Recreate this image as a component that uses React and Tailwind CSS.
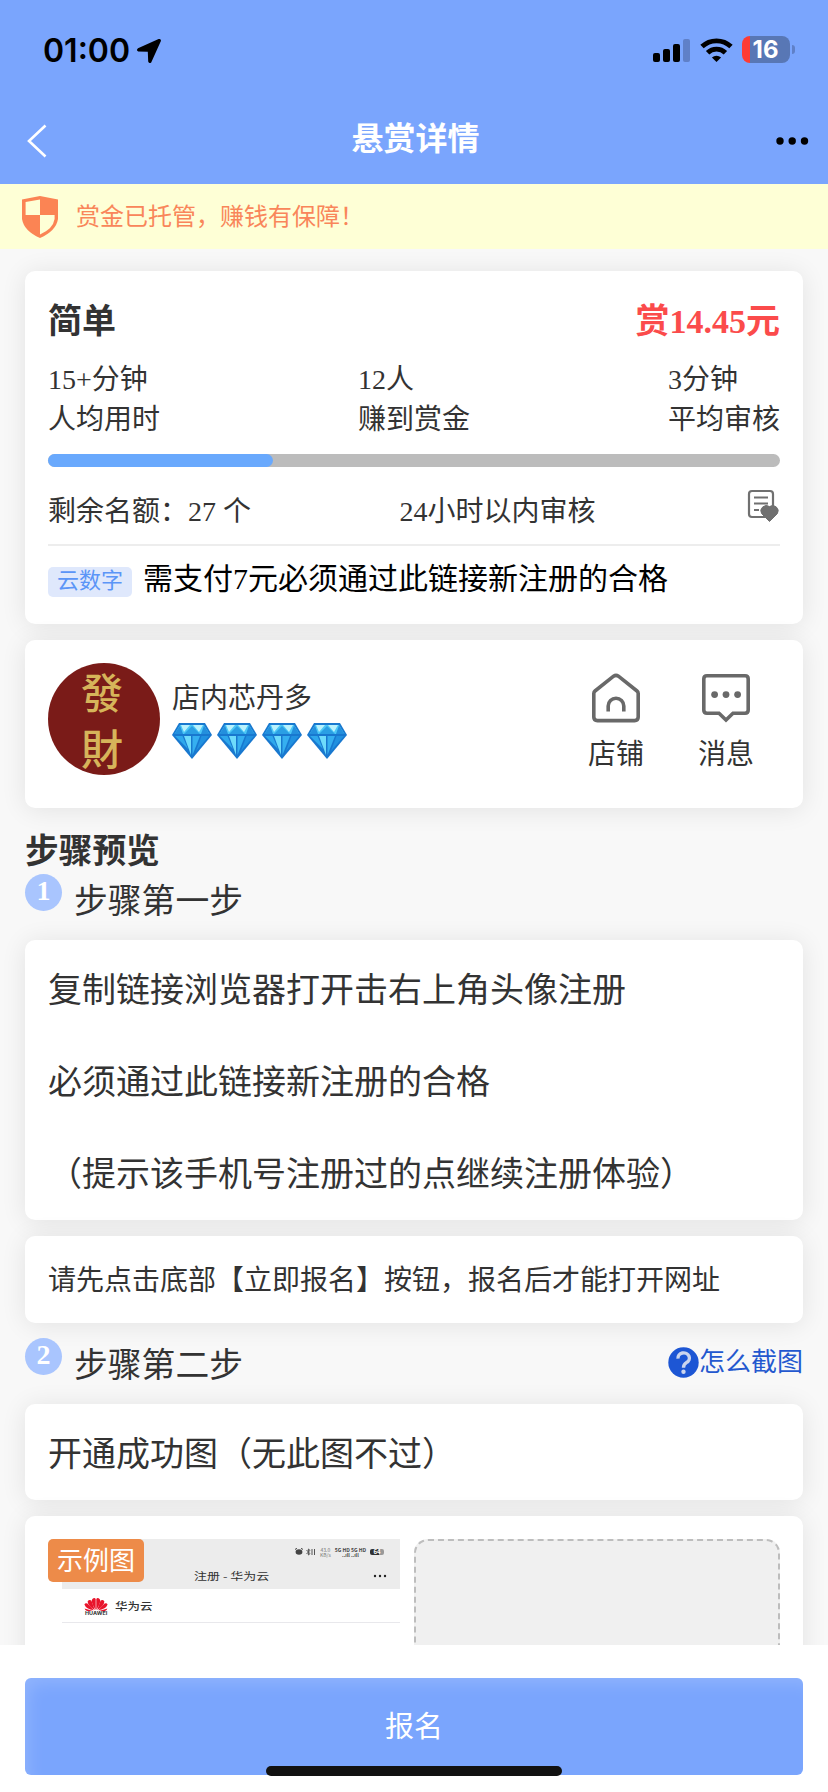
const FONT = "font-['Liberation_Serif','Noto_Sans_CJK_SC',sans-serif]";
const CARD = 'bg-white rounded-[10px] shadow-[0_2px_26px_rgba(0,0,0,0.09)]';

function StatusBar() {
  return (
    <div className="h-[98px] pl-[43px] pr-[33px] flex items-center justify-between">
      <div className="pt-[3px] flex items-center gap-[6px]">
        <span className="font-['Inter',sans-serif] font-semibold text-[32px] leading-none text-black">01:00</span>
        <svg width="26" height="26" viewBox="0 0 26 26">
          <path d="M22.6 1.1 L2 10.2 Q-.2 12.2 2.2 13.4 L11.8 13.8 L12.2 23.4 Q13.2 26 15.2 24.4 L24.9 3 Q25.2 .2 22.6 1.1Z" fill="#000" />
        </svg>
      </div>
      <div className="pt-[1px] flex items-center gap-[9px]">
        <svg width="38" height="24" viewBox="0 0 38 24">
          <rect x="0" y="15" width="7" height="9" rx="2" />
          <rect x="10" y="11" width="7" height="13" rx="2" />
          <rect x="20" y="6" width="7" height="18" rx="2" />
          <rect x="30" y="1" width="7" height="23" rx="2" fill="#5f80c8" />
        </svg>
        <svg width="33" height="24" viewBox="0 0 33 24" fill="none" stroke="#000" strokeWidth="4.8">
          <path d="M2 8.6 A21 21 0 0 1 31 8.6" />
          <path d="M7.6 14.8 A12.6 12.6 0 0 1 25.4 14.8" />
          <path d="M11.9 19.4 A7 7 0 0 1 21.1 19.4 L16.5 24Z" fill="#000" stroke="none" />
        </svg>
        <div className="flex items-center gap-[2px]">
          <div className="w-[48px] h-[27px] rounded-[8px] overflow-hidden bg-[linear-gradient(to_right,#fd3b34_8.5px,#5877b5_8.5px)] flex items-center justify-center">
            <span className="font-['Inter',sans-serif] font-bold text-[24px] leading-none text-white pr-[1px]">16</span>
          </div>
          <div className="w-[3px] h-[9px] rounded-r-full bg-[#5f80c8]" />
        </div>
      </div>
    </div>
  );
}

function NavBar() {
  return (
    <div className="h-[86px] pl-[26px] pr-[19px] flex items-center justify-between">
      <svg width="30" height="34" viewBox="0 0 30 34" fill="none" stroke="#fff" strokeWidth="2.6">
        <path d="M19.5 1.5 L3 17 L19.5 32.5" />
      </svg>
      <h1 className="text-[32px] leading-none font-bold text-white pb-[4px]">悬赏详情</h1>
      <svg width="34" height="8" viewBox="0 0 34 8">
        <circle cx="5" cy="4" r="3.7" />
        <circle cx="17.2" cy="4" r="3.7" />
        <circle cx="29.5" cy="4" r="3.7" />
      </svg>
    </div>
  );
}

function Notice() {
  return (
    <div className="h-[65px] pl-[22px] bg-[#feffd6] flex items-center gap-[18px]">
      <svg width="36" height="42" viewBox="0 0 36 42">
        <path d="M18 0 L36 3.5 V23 Q34 35 18 42 Q2 35 0 23 V3.5Z" fill="#fb8454" />
        <path d="M18 3.4 V19 H3.6 V6Z" fill="#feffd6" />
        <path d="M18 19 H32.6 V23 Q31 33 18 38.4Z" fill="#feffd6" />
      </svg>
      <p className="text-[24px] leading-none text-[#f9865a]">赏金已托管，赚钱有保障！</p>
    </div>
  );
}

function Stat({ value, label }) {
  return (
    <div className="text-[28px] leading-[40px]">
      <p>{value}</p>
      <p>{label}</p>
    </div>
  );
}

function TaskCard() {
  return (
    <section className={`${CARD} h-[353px] px-[23px] pt-[29px]`}>
      <div className="flex justify-between text-[34px] leading-[44px] font-bold">
        <h2>简单</h2>
        <span className="text-[#fb4b4b]">赏14.45元</span>
      </div>
      <div className="mt-[16px] flex justify-between">
        <Stat value="15+分钟" label="人均用时" />
        <Stat value="12人" label="赚到赏金" />
        <Stat value="3分钟" label="平均审核" />
      </div>
      <div className="mt-[14px] h-[13px] rounded-full bg-[#bcbcbc]">
        <div className="w-[225px] h-full rounded-full bg-[#69a9fd]" />
      </div>
      <div className="mt-[21px] h-[58px] border-b-2 border-[#ededed] flex justify-between text-[28px] leading-[47px]">
        <p>剩余名额：27 个</p>
        <p className="pr-[3px]">24小时以内审核</p>
        <svg className="mt-[1px]" width="33" height="34" viewBox="0 0 33 34" fill="none" stroke="#707070" strokeWidth="2.2">
          <rect x="2" y="2" width="24" height="26" rx="3" />
          <path d="M7 8.5 H21 M7 14.5 H21 M7 21 H12" />
          <path d="M22.5 32.5 L14.6 24.6 A5.4 5.4 0 0 1 22.5 17.6 A5.4 5.4 0 0 1 30.4 24.6Z" fill="#707070" strokeWidth="1" />
        </svg>
      </div>
      <div className="mt-[10px] flex items-center gap-[11px]">
        <span className="mt-[6px] h-[30px] w-[84px] rounded-[5px] bg-[#dfe8fc] text-[22px] leading-[28px] text-[#5b95f7] text-center">云数字</span>
        <p className="text-[30px] leading-[45px] text-black">需支付7元必须通过此链接新注册的合格</p>
      </div>
    </section>
  );
}

function Diamond() {
  return (
    <svg width="40" height="36" viewBox="0 0 40 36">
      <path d="M7 0 H33 L40 12 L20 36 L0 12Z" fill="#1878cf" />
      <path d="M8 2 H32 L37.5 11 H2.5Z" fill="#4cc8f6" />
      <path d="M9 2 L18 2 L12 9Z M21 2 H31 L27 9Z" fill="#b9f2fd" />
      <path d="M2.5 11 L8 2.5 L11 11Z M32 2.5 L37.5 11 H29Z" fill="#238fdd" />
      <path d="M12 11 L20 3 L28 11Z" fill="#2a9fe4" />
      <path d="M12 13 H19 V32Z" fill="#6edbfb" />
      <path d="M3 13 H10.5 L16 26Z" fill="#2ea8ec" />
      <path d="M20.5 13 H28 L20.5 32Z" fill="#35aff0" />
      <path d="M29.5 13 H37 L24 28Z" fill="#2191e0" />
    </svg>
  );
}

function ShopCard() {
  return (
    <section className={`${CARD} mt-[16px] h-[168px] pl-[23px] pr-[49px] pt-[23px] flex justify-between`}>
      <div className="flex gap-[12px]">
        <div className="size-[112px] rounded-full bg-[#7a1b18] text-[#d6b45a] font-['Noto_Sans_CJK_TC',sans-serif] font-medium text-[42px] leading-[56px] text-center pr-[4px]">
          <p>發</p>
          <p>財</p>
        </div>
        <div className="pt-[17px]">
          <p className="text-[28px] leading-[38px]">店内芯丹多</p>
          <div className="mt-[5px] flex gap-[5px]">
            {[1, 2, 3, 4].map((n) => <Diamond key={n} />)}
          </div>
        </div>
      </div>
      <div className="pt-[10px] flex gap-[54px] text-[28px] leading-[40px]">
        <div className="flex flex-col items-center gap-[12px]">
          <svg width="50" height="50" viewBox="0 0 50 50" fill="none" stroke="#696969" strokeWidth="3.6">
            <path d="M2.8 20.5 Q2.8 19 4 18 L22.6 3.2 Q25 1.4 27.4 3.2 L46 18 Q47.2 19 47.2 20.5 V44 Q47.2 47.6 43.6 47.6 H6.4 Q2.8 47.6 2.8 44Z" />
            <path d="M17.2 38.5 V33 A7.8 7.8 0 0 1 32.8 33 V38.5" />
          </svg>
          <span>店铺</span>
        </div>
        <div className="flex flex-col items-center gap-[12px]">
          <svg width="50" height="50" viewBox="0 0 50 50" fill="none" stroke="#696969" strokeWidth="3.6">
            <path d="M6 2.8 H44 Q47.2 2.8 47.2 6 V37 Q47.2 40.2 44 40.2 H32 L25 47 L18 40.2 H6 Q2.8 40.2 2.8 37 V6 Q2.8 2.8 6 2.8Z" />
            <g fill="#696969" stroke="none">
              <circle cx="13.6" cy="21.6" r="3.4" />
              <circle cx="25" cy="21.6" r="3.4" />
              <circle cx="36.6" cy="21.6" r="3.4" />
            </g>
          </svg>
          <span>消息</span>
        </div>
      </div>
    </section>
  );
}

function StepTitle({ num, children, extra }) {
  return (
    <div className="h-[51px] flex items-start">
      <span className="size-[37px] rounded-full bg-[#a9c5fe] text-white text-[28px] leading-[33px] font-bold text-center">{num}</span>
      <h3 className="ml-[12px] mt-[3px] text-[33.8px] leading-[50px]">{children}</h3>
      {extra}
    </div>
  );
}

function HowTo() {
  return (
    <a className="ml-auto mt-[8px] flex items-center text-[26px] leading-[34px] text-[#2458cf]">
      <svg className="-mt-[2px]" width="31" height="31" viewBox="0 0 31 31">
        <circle cx="15.5" cy="15.5" r="15.2" fill="#1d56d4" />
        <path d="M10 11.6 A5.7 5.2 0 1 1 18.4 15.6 Q15.5 17.4 15.5 20.8" fill="none" stroke="#cbd5ee" strokeWidth="3.4" />
        <circle cx="15.5" cy="24.8" r="2.2" fill="#cbd5ee" />
      </svg>
      怎么截图
    </a>
  );
}

function HuaweiLogo() {
  return (
    <svg width="24" height="13" viewBox="0 0 24 13" fill="#e8142b">
      <path d="M11.7 12 Q6.4 4 8.4 1 Q10.5 -.8 11.7 1Z M12.3 12 Q17.6 4 15.6 1 Q13.5 -.8 12.3 1Z" />
      <path d="M10.8 12 Q4 8 3.6 3.4 Q5 1.2 7.4 2.4Z M13.2 12 Q20 8 20.4 3.4 Q19 1.2 16.6 2.4Z" />
      <path d="M9.8 12.2 Q2 11 .4 6.4 Q1 4.8 3.4 5.4Z M14.2 12.2 Q22 11 23.6 6.4 Q23 4.8 20.6 5.4Z" />
      <path d="M9 13 H3 Q1 12.6 .6 10.6Z M15 13 H21 Q23 12.6 23.4 10.6Z" />
    </svg>
  );
}

function SampleShot() {
  return (
    <div className="relative w-[352px] pl-[14px] font-['Noto_Sans_CJK_SC',sans-serif]">
      <div className="h-[50px] bg-[#ececec] flex flex-col">
        <div className="h-[26px] pr-[16px] flex items-center justify-end gap-[4px] text-[#444]">
          <svg width="21" height="8" viewBox="0 0 21 8" fill="#444">
            <ellipse cx="4" cy="4" rx="3.4" ry="2.8" />
            <path d="M0 1.4 L2 .4 M6 .4 L8 1.4" stroke="#444" />
            <path d="M11.5 2 L15 5.6 L13.4 7 V1 L15 2.4 L11.5 6 M17 1 V7 M19.5 1 V7" fill="none" stroke="#555" />
          </svg>
          <span className="text-[5px] leading-[5px] text-[#777] text-center">43.0<br />KB/s</span>
          <span className="text-[5px] leading-[5px] font-bold text-center">5G HD 5G HD<br />..ıll ..ıll</span>
          <span className="w-[14px] h-[6px] rounded-[2px] bg-[linear-gradient(to_right,#333_9px,#999_9px)] text-white text-[6px] leading-[6px] text-center font-bold">64</span>
        </div>
        <div className="h-[22px] pl-[132px] pr-[13px] flex items-center justify-between text-[12.5px] leading-none text-[#333]">
          <span className="origin-left scale-x-[1.04] scale-y-[0.8] whitespace-pre">注册 - 华为云</span>
          <svg width="14" height="4" viewBox="0 0 14 4" fill="#222">
            <circle cx="2" cy="2" r="1.2" />
            <circle cx="7" cy="2" r="1.2" />
            <circle cx="12" cy="2" r="1.2" />
          </svg>
        </div>
      </div>
      <div className="h-[34px] border-b border-[#e8e8ec] pl-[22px] pt-[2px] flex items-center gap-[7px]">
        <div className="flex flex-col items-center">
          <HuaweiLogo />
          <span className="font-['Inter',sans-serif] font-bold text-[5px] leading-[5px] scale-x-110 text-[#333]">HUAWEI</span>
        </div>
        <span className="text-[12.5px] leading-none font-medium text-[#333] scale-y-80">华为云</span>
      </div>
      <span className="absolute left-0 top-0 w-[96px] h-[43px] rounded-[5px] bg-[#ed8b49] text-white text-[26px] leading-[40px] text-center">示例图</span>
    </div>
  );
}

export default function App() {
  return (
    <div className={`w-[828px] h-[1792px] overflow-hidden bg-[#f8f8f8] text-[#333] flex flex-col ${FONT}`}>
      <header className="bg-[#7aa5fd]">
        <StatusBar />
        <NavBar />
      </header>
      <Notice />

      <main className="h-[1396px] overflow-hidden px-[25px] pt-[22px]">
        <TaskCard />
        <ShopCard />

        <h2 className="mt-[18px] h-[48px] text-[33.7px] leading-[51px] font-bold">步骤预览</h2>
        <StepTitle num="1">步骤第一步</StepTitle>
        <section className={`${CARD} mt-[15px] h-[280px] px-[23px] pt-[5px] text-[34px] leading-[92px]`}>
          <p>复制链接浏览器打开击右上角头像注册</p>
          <p>必须通过此链接新注册的合格</p>
          <p>（提示该手机号注册过的点继续注册体验）</p>
        </section>
        <section className={`${CARD} mt-[16px] h-[87px] px-[23px] text-[28px] leading-[89px]`}>
          请先点击底部【立即报名】按钮，报名后才能打开网址
        </section>

        <div className="pt-[15px]">
          <StepTitle num="2" extra={<HowTo />}>步骤第二步</StepTitle>
        </div>
        <section className={`${CARD} mt-[15px] h-[96px] px-[23px] text-[34px] leading-[101px]`}>
          开通成功图（无此图不过）
        </section>
        <section className={`${CARD} mt-[16px] h-[400px] px-[23px] pt-[23px] flex gap-[14px]`}>
          <SampleShot />
          <div className="flex-1 rounded-[14px] border-2 border-dashed border-[#bdbdbd] bg-[#f0f0f0]" />
        </section>
      </main>

      <footer className="relative h-[147px] bg-white px-[25px] pt-[33px]">
        <button className="block w-full h-[97px] rounded-[6px] bg-[#7aa5fd] shadow-[inset_8px_10px_16px_-4px_rgba(255,255,255,0.16)] text-white text-[29px] leading-[96px]">
          报名
        </button>
        <div className="absolute left-[266px] top-[121px] w-[296px] h-[10px] rounded-full bg-[#111]" />
      </footer>
    </div>
  );
}
